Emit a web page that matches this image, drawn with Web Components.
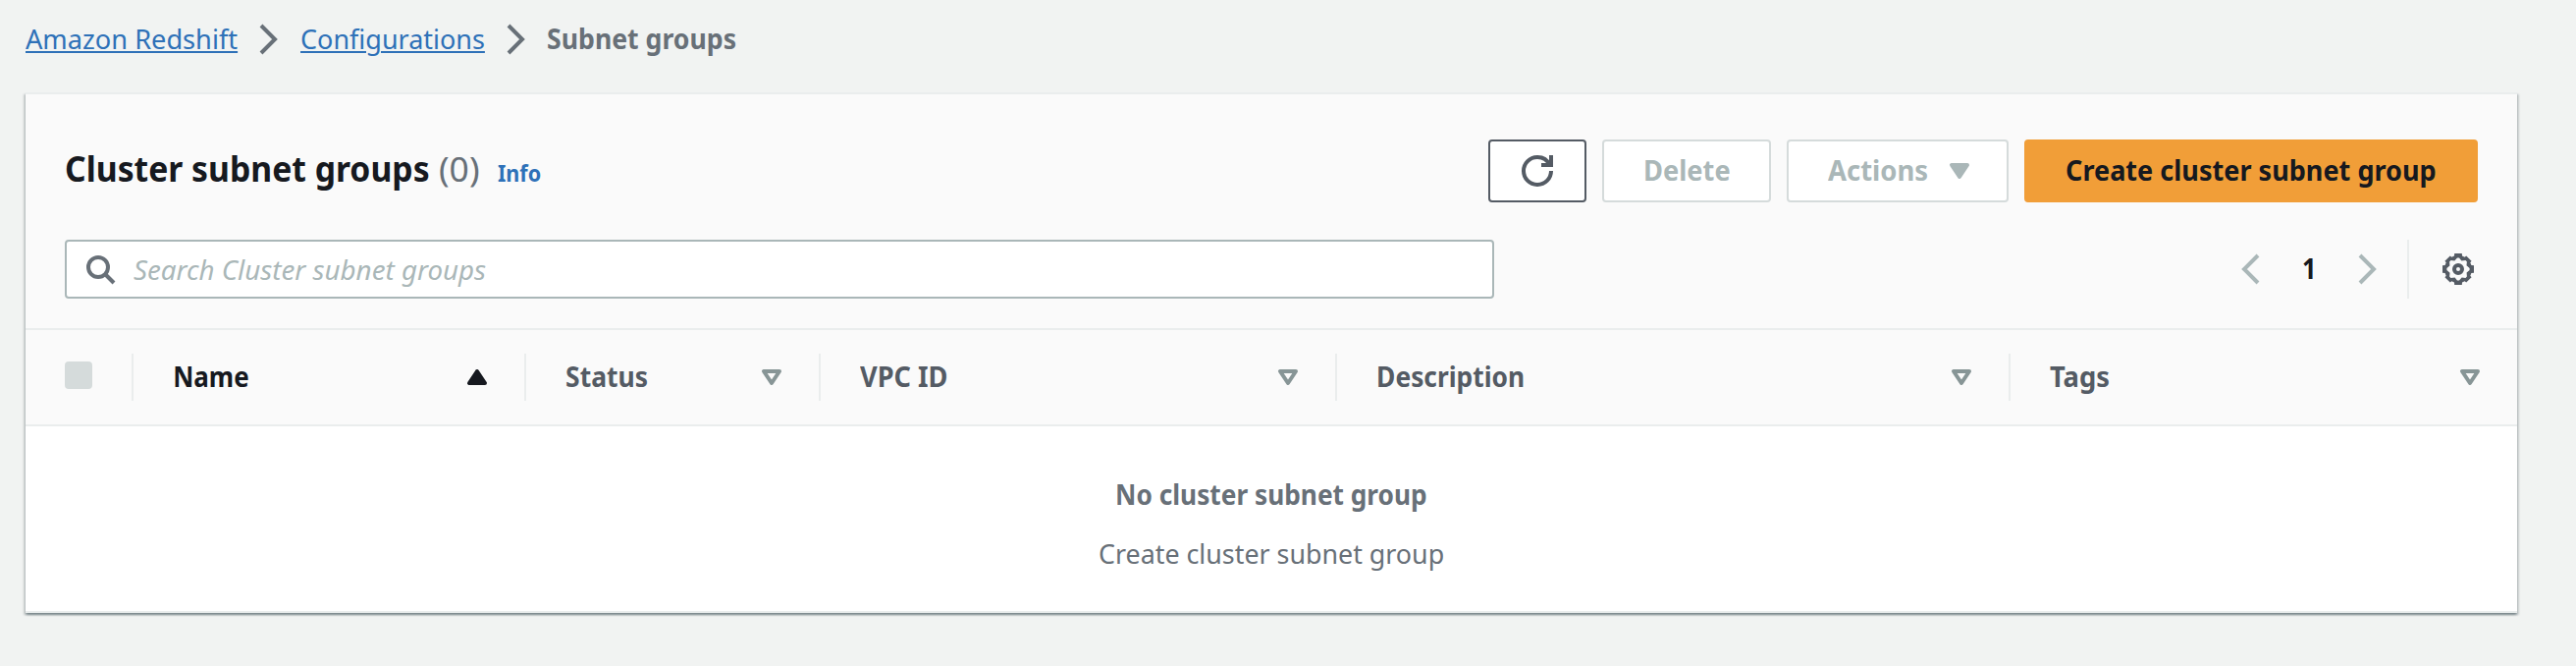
<!DOCTYPE html>
<html lang="en">
<head>
<meta charset="utf-8">
<title>Subnet groups</title>
<style>
html, body { margin: 0; height: 100%; }
body { background: #f1f3f2; font-family: "Noto Sans", "Open Sans", sans-serif; color: #16191f; overflow: hidden; }
</style>
</head>
<body>
<subnet-page></subnet-page>
<script>
const make = (tag, html, connected) => customElements.define(tag, class extends HTMLElement {
  connectedCallback() {
    if (!this.shadowRoot) this.attachShadow({ mode: 'open' }).innerHTML = typeof html === 'function' ? html(this) : html;
    if (connected) connected(this);
  }
});

/* One line of text whose inked width is set by its "w" attribute. */
make('fit-text', el => `<style>
  :host { display: block; flex: none; width: ${el.getAttribute('w')}px; height: 40px; padding-bottom: 2px; line-height: 40px; white-space: nowrap; box-sizing: content-box;
    font-size: ${el.getAttribute('size') || 28}px; font-weight: ${el.getAttribute('weight') || 400}; font-style: ${el.getAttribute('slant') || 'normal'}; }
  :host([link]) { color: #2e71b8; }
  span { display: inline-block; transform-origin: 0 50%; }
  :host([underlined]) span { text-decoration: underline; text-decoration-thickness: 2px; text-underline-offset: 2px; }
  </style><span><slot></slot></span>`, el => {
  const c = document.createElement('canvas').getContext('2d');
  c.font = `${el.getAttribute('slant') || 'normal'} ${el.getAttribute('weight') || 400} ${el.getAttribute('size') || 28}px "Noto Sans"`;
  const m = c.measureText(el.textContent.trim());
  const k = el.getAttribute('w') / (m.actualBoundingBoxRight + m.actualBoundingBoxLeft);
  el.shadowRoot.querySelector('span').style.transform = `translateX(${m.actualBoundingBoxLeft * k}px) scaleX(${k})`;
});

/* Eight-toothed gear: outer outline and star-shaped opening, joined by the even-odd rule. */
const ring = local => {
  const out = [];
  for (let i = 0; i < 8; i++) {
    const a = i * Math.PI / 4;
    for (const [x, y0] of local) {
      const y = i % 2 && y0 < -7 ? y0 + .3 : y0;
      out.push((8 + x * Math.cos(a) - y * Math.sin(a)).toFixed(2) + ' ' + (8 + x * Math.sin(a) + y * Math.cos(a)).toFixed(2));
    }
  }
  return 'M' + out.join('L') + 'z';
};
const gear = ring([[-2, -6.700], [-1.900, -8], [1.900, -8], [2, -6.700]]) + ring([[-.500, -5.800], [.500, -5.800], [1.700, -4.300]]);

const glyphs = {
  right: '<path d="m4 1 7 7-7 7"/>',
  left: '<path d="m11 1-7 7 7 7"/>',
  refresh: '<path d="M10 5h5V0"/><path d="M15 8a6.957 6.957 0 0 1-7 7 6.957 6.957 0 0 1-7-7 6.957 6.957 0 0 1 7-7 6.870 6.870 0 0 1 6.300 4"/>',
  search: '<circle cx="7" cy="7" r="5"/><path d="m15 15-4.500-4.500"/>',
  down: '<path stroke-linejoin="round" d="M4 5h8l-4 6z"/>',
  downfill: '<path fill="currentColor" stroke-linejoin="round" d="M4 5h8l-4 6z"/>',
  up: '<path fill="currentColor" stroke-linejoin="round" d="M4 11h8L8 5z"/>',
  gear: `<path fill="currentColor" fill-rule="evenodd" stroke="none" d="${gear}"/><circle cx="8" cy="8" r="2"/>`
};
make('ui-icon', el => `<style>:host { display: block; flex: none; width: 32px; height: 32px; } svg { display: block; }</style>
  <svg width="32" height="32" viewBox="0 0 16 16" fill="none" stroke="currentColor" stroke-width="2">${glyphs[el.getAttribute('name')]}</svg>`);

make('bread-crumbs', `<style>
  :host { display: flex; align-items: center; height: 40px; padding: 19px 0 35px 26px; color: #687078; }
  ui-icon { margin: 2px 16px 0 16px; }
  ui-icon.first { margin-right: 17px; }
  fit-text { padding-bottom: 0; }
  </style>
  <fit-text w="216" link underlined>Amazon Redshift</fit-text><ui-icon class="first" name="right"></ui-icon>
  <fit-text w="186.500" link underlined>Configurations</fit-text><ui-icon name="right"></ui-icon>
  <fit-text w="191" weight="700">Subnet groups</fit-text>`);

make('ui-button', `<style>
  :host { display: flex; align-items: center; justify-content: center; box-sizing: border-box; height: 64px; border: 2px solid #545b64; border-radius: 4px; background: #fff; color: #545b64; }
  :host([disabled]) { border-color: #d5dbdb; color: #aab7b8; }
  :host([primary]) { border-color: #f19e38; background: #f19e38; color: #16191f; }
  </style><slot></slot>`);

make('panel-header', `<style>
  :host { display: flex; align-items: center; justify-content: space-between; height: 64px; padding: 46px 40px 0 41px; }
  .title { display: flex; align-items: center; }
  .count { margin-left: 11px; color: #687078; }
  .info { margin: 6px 0 0 19px; }
  .title fit-text { padding-bottom: 4px; }
  .title .info { padding-bottom: 2px; }
  .actions { display: flex; gap: 16px; }
  .refresh { width: 100px; } .delete { width: 172px; padding-left: 2px; } .more { width: 226px; gap: 17px; padding-left: 8px; } .create { width: 462px; }
  </style>
  <div class="title"><fit-text w="370" size="35" weight="700">Cluster subnet groups</fit-text>
  <fit-text class="count" w="40" size="35">(0)</fit-text><fit-text class="info" w="43.500" size="23.500" weight="700" link>Info</fit-text></div>
  <div class="actions">
  <ui-button class="refresh"><ui-icon name="refresh"></ui-icon></ui-button>
  <ui-button class="delete" disabled><fit-text w="86" weight="700">Delete</fit-text></ui-button>
  <ui-button class="more" disabled><fit-text w="101" weight="700">Actions</fit-text><ui-icon name="downfill"></ui-icon></ui-button>
  <ui-button class="create" primary><fit-text w="376" weight="700">Create cluster subnet group</fit-text></ui-button>
  </div>`);

make('search-field', el => `<style>
  :host { display: flex; align-items: center; box-sizing: border-box; width: 1456px; height: 60px; padding-left: 18px; gap: 18px; border: 2px solid #aab7b8; border-radius: 4px; background: #fff; color: #aab7b8; }
  ui-icon { color: #687078; }
  fit-text { padding-bottom: 0; }
  </style><ui-icon name="search"></ui-icon><fit-text w="359" slant="italic">${el.getAttribute('placeholder')}</fit-text>`);

make('page-nav', `<style>
  :host { display: flex; align-items: center; height: 60px; color: #aab7b8; }
  fit-text { margin: 0 40px 0 36px; color: #16191f; }
  .rule { width: 2px; height: 60px; margin: 0 34px 0 24px; background: #eaeded; }
  .gear { color: #545b64; }
  </style><ui-icon name="left"></ui-icon><fit-text w="10" weight="700">1</fit-text><ui-icon name="right"></ui-icon><div class="rule"></div><ui-icon class="gear" name="gear"></ui-icon>`);

make('column-head', el => `<style>
  :host { display: flex; align-items: center; justify-content: space-between; box-sizing: border-box; height: 96px; padding: 0 34px 0 40px; color: #545b64; }
  :host([last]) { padding-right: 32px; }
  :host([sorted]) { color: #16191f; }
  ui-icon { color: #879596; }
  :host([sorted]) ui-icon { color: inherit; }
  .rule { width: 2px; height: 48px; background: #eaeded; margin-left: -42px; margin-right: ${el.getAttribute('lead') || 40}px; }
  .label { display: flex; align-items: center; }
  </style><div class="label"><div class="rule"></div><fit-text w="${el.getAttribute('w')}" weight="700">${el.getAttribute('label')}</fit-text></div>
  <ui-icon name="${el.hasAttribute('sorted') ? 'up' : 'down'}"></ui-icon>`);

make('table-head', `<style>
  :host { display: grid; grid-template-columns: 110px 400px 300px 526px 686px 516px; align-items: center; height: 96px; border: solid #eaeded; border-width: 2px 0; background: #fafafa; }
  .box { width: 28px; height: 28px; margin: -4px 0 0 40px; border-radius: 4px; background: #d5dbdb; }
  </style><div class="box"></div>
  <column-head sorted label="Name" w="75" lead="41.500"></column-head>
  <column-head label="Status" w="82" lead="40.500"></column-head>
  <column-head label="VPC ID" w="88"></column-head>
  <column-head label="Description" w="148" lead="41.500"></column-head>
  <column-head last label="Tags" w="60"></column-head>`);

make('empty-state', `<style>
  :host { display: flex; flex-direction: column; align-items: center; gap: 18px; padding-top: 49px; color: #687078; }
  </style><fit-text w="315" weight="700">No cluster subnet group</fit-text><fit-text w="350">Create cluster subnet group</fit-text>`);

make('ui-panel', `<style>
  :host { display: block; box-sizing: border-box; width: 2538px; height: 530px; margin-left: 26px; border: solid #eaeded; border-width: 2px 0; background: #fff;
    box-shadow: 0 2px 2px 0 rgba(0,28,36,.3), 2px 2px 2px 0 rgba(0,28,36,.15), -2px 2px 2px 0 rgba(0,28,36,.15); }
  .top { height: 238px; background: #fafafa; }
  .tools { display: flex; justify-content: space-between; padding: 38px 44px 0 40px; }
  </style><div class="top"><panel-header></panel-header>
  <div class="tools"><search-field placeholder="Search Cluster subnet groups"></search-field><page-nav></page-nav></div></div>
  <table-head></table-head><empty-state></empty-state>`);

make('subnet-page', `<style>:host { display: block; }</style><bread-crumbs></bread-crumbs><ui-panel></ui-panel>`);
</script>
</body>
</html>
